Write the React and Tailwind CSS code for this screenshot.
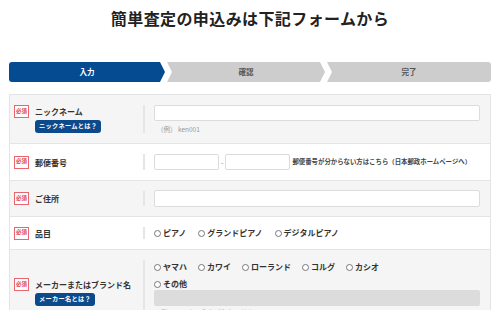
import React from "react";

const font = { fontFamily: '"Noto Sans CJK JP", "Noto Sans", sans-serif' };

const Required = () => (
  <span className="flex h-[13px] w-[15px] shrink-0 items-center justify-center border border-[#e8666c] bg-white text-[5.5px] font-bold leading-none text-[#e0454d]">
    必須
  </span>
);

const InfoBadge = ({ children }) => (
  <span className="mt-[2px] inline-flex h-[13px] items-center rounded-[3px] bg-[#0c4a8c] px-[4px] text-[6.2px] font-bold leading-none tracking-[0.3px] text-white">
    {children}
  </span>
);

const Radio = ({ label }) => (
  <label className="flex items-center gap-[2px] text-[8px] font-semibold leading-none text-[#333]">
    <span className="h-[7px] w-[7px] rounded-full border border-[#777] bg-white" />
    {label}
  </label>
);

const Row = ({ label, badge, bg, height, children }) => (
  <div className={`flex items-center border-b border-[#e4e4e4] ${bg} ${height}`}>
    <div className="flex w-[133px] shrink-0 items-start gap-[6px] pl-[4px]">
      <Required />
      <div className="flex flex-col items-start">
        <span className="text-[8px] font-semibold leading-[13px] text-[#333]">
          {label}
        </span>
        {badge && <InfoBadge>{badge}</InfoBadge>}
      </div>
    </div>
    <div className="my-[10px] w-[2px] self-stretch bg-[#e6e6e6]" />
    <div className="ml-[9px] flex-1 pr-[10px]">{children}</div>
  </div>
);

const TextInput = ({ className = "" }) => (
  <div
    className={`h-[16px] rounded-[2px] border border-[#dcdcdc] bg-white ${className}`}
  />
);

export default function App() {
  return (
    <div className="min-h-[310px] w-[500px] overflow-hidden bg-white" style={font}>
      <h1 className="pt-[8px] text-center text-[16px] font-bold leading-[20px] tracking-[0.4px] text-[#222]">
        簡単査定の申込みは下記フォームから
      </h1>

      <div className="mx-[9px] mt-[34px] flex h-[20px] gap-[2px]">
        <div className="flex w-[156px] items-center justify-center rounded-l-[3px] bg-[#044b92] text-[7.5px] font-bold text-white [clip-path:polygon(0_0,calc(100%-5px)_0,100%_50%,calc(100%-5px)_100%,0_100%)]">
          入力
        </div>
        <div className="flex w-[158px] items-center justify-center bg-[#cdcdcd] text-[7.5px] font-bold text-[#555] [clip-path:polygon(0_0,calc(100%-5px)_0,100%_50%,calc(100%-5px)_100%,0_100%,5px_50%)]">
          確認
        </div>
        <div className="flex flex-1 items-center justify-center rounded-r-[3px] bg-[#cdcdcd] text-[7.5px] font-bold text-[#555] [clip-path:polygon(0_0,100%_0,100%_100%,0_100%,5px_50%)]">
          完了
        </div>
      </div>

      <div className="mx-[9px] mt-[12px] border-x border-t border-[#e4e4e4]">
        <Row label="ニックネーム" badge="ニックネームとは？" bg="bg-[#f5f5f5]" height="h-[49px]">
          <TextInput />
          <p className="mt-[4px] pl-[3px] text-[6.5px] leading-[9px] text-[#999]">
            （例） ken001
          </p>
        </Row>

        <Row label="郵便番号" bg="bg-white" height="h-[37px]">
          <div className="flex items-center">
            <TextInput className="w-[65px]" />
            <span className="mx-[2px] text-[7px] text-[#888]">-</span>
            <TextInput className="w-[65px]" />
            <span className="ml-[2px] text-[6.4px] font-semibold text-[#444]">
              郵便番号が分からない方はこちら（日本郵政ホームページへ）
            </span>
          </div>
        </Row>

        <Row label="ご住所" bg="bg-[#f5f5f5]" height="h-[36px]">
          <TextInput className="h-[17px]" />
        </Row>

        <Row label="品目" bg="bg-white" height="h-[33px]">
          <div className="flex items-center gap-[12px]">
            <Radio label="ピアノ" />
            <Radio label="グランドピアノ" />
            <Radio label="デジタルピアノ" />
          </div>
        </Row>

        <div className="flex h-[70px] items-center bg-[#f5f5f5]">
          <div className="flex w-[133px] shrink-0 items-start gap-[6px] pl-[4px] pt-[14px]">
            <Required />
            <div className="flex flex-col items-start">
              <span className="text-[8px] font-semibold leading-[13px] text-[#333]">
                メーカーまたはブランド名
              </span>
              <InfoBadge>メーカー名とは？</InfoBadge>
            </div>
          </div>
          <div className="mt-[10px] w-[2px] self-stretch bg-[#e6e6e6]" />
          <div className="ml-[9px] flex-1 self-start pr-[10px] pt-[13px]">
            <div className="flex items-center gap-[11px]">
              <Radio label="ヤマハ" />
              <Radio label="カワイ" />
              <Radio label="ローランド" />
              <Radio label="コルグ" />
              <Radio label="カシオ" />
            </div>
            <div className="mt-[9px]">
              <Radio label="その他" />
            </div>
            <div className="mt-[2px] h-[16px] rounded-[2px] bg-[#dcdcdc]" />
            <p className="mt-[2px] text-[6.5px] leading-[9px] text-[#bbb]">
              （例） メーカー名をご入力ください
            </p>
          </div>
        </div>
      </div>
    </div>
  );
}
